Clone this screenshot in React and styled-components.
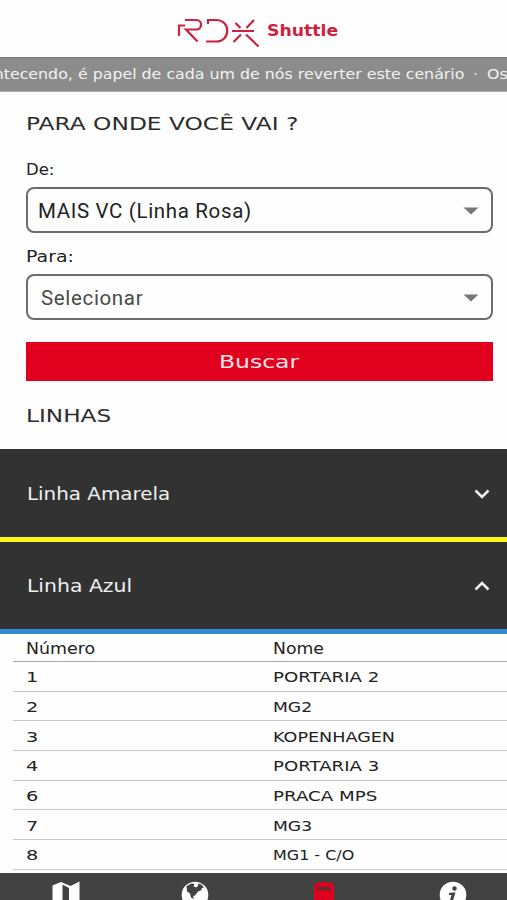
import styled, { createGlobalStyle } from "styled-components";

const stops = [
  { number: "1", name: "PORTARIA 2", stretch: 1.295 },
  { number: "2", name: "MG2", stretch: 1.23 },
  { number: "3", name: "KOPENHAGEN", stretch: 1.255 },
  { number: "4", name: "PORTARIA 3", stretch: 1.295 },
  { number: "6", name: "PRACA MPS", stretch: 1.3 },
  { number: "7", name: "MG3", stretch: 1.23 },
  { number: "8", name: "MG1 - C/O", stretch: 1.14 },
];

const App = () => {
  return (
    <Screen>
      <GlobalStyle />
      <Header>
        <Logo />
        <Wide $size={16} $stretch={1.08} $bold>
          Shuttle
        </Wide>
      </Header>
      <Ticker>
        <TickerText>
          <Wide $size={14} $stretch={1.13} $origin="right">
            acontecendo, é papel de cada um de nós reverter este cenário
          </Wide>
        </TickerText>
        <Dot>·</Dot>
        <Wide $size={14} $stretch={1.13}>
          Os
        </Wide>
      </Ticker>
      <Search>
        <Title>
          <Wide $size={18} $stretch={1.295}>
            PARA ONDE VOCÊ VAI ?
          </Wide>
        </Title>
        <Label>
          <Wide $size={15} $stretch={1.1}>
            De:
          </Wide>
        </Label>
        <Select>
          <span>MAIS VC (Linha Rosa)</span>
          <Caret />
        </Select>
        <Label>
          <Wide $size={15} $stretch={1.26}>
            Para:
          </Wide>
        </Label>
        <Select $placeholder>
          <span>Selecionar</span>
          <Caret />
        </Select>
        <Button>
          <Wide $size={17} $stretch={1.38} $origin="center">
            Buscar
          </Wide>
        </Button>
        <Subtitle>
          <Wide $size={18} $stretch={1.29}>
            LINHAS
          </Wide>
        </Subtitle>
      </Search>
      <Line $color="#f7f71e" $height={93}>
        <Wide $size={17} $stretch={1.17}>
          Linha Amarela
        </Wide>
        <Chevron />
      </Line>
      <Line $color="#318ad2" $height={92}>
        <Wide $size={17} $stretch={1.2}>
          Linha Azul
        </Wide>
        <Chevron up />
      </Line>
      <Stops>
        <Row $head>
          <Wide $size={15} $stretch={1.16}>
            Número
          </Wide>
          <Wide $size={15} $stretch={1.15}>
            Nome
          </Wide>
        </Row>
        {stops.map((stop) => (
          <Row key={stop.number}>
            <Wide $size={14} $stretch={1.38}>
              {stop.number}
            </Wide>
            <Wide $size={14} $stretch={stop.stretch}>
              {stop.name}
            </Wide>
          </Row>
        ))}
      </Stops>
      <Nav>
        <MapIcon />
        <GlobeIcon />
        <BusIcon />
        <InfoIcon />
      </Nav>
    </Screen>
  );
};

const Logo = () => (
  <svg width="84" height="32" viewBox="0 0 84 32" fill="none">
    <g stroke="#c9233f" strokeWidth="2.2">
      <path d="M2 21V10.5H8" />
      <path d="M8 5H19.5C25.5 5 25.5 14.500 19.5 14.500H9L20.500 26.5" />
      <path d="M31 9V5H39C54 5 54 26.500 39 26.500H29" />
      <path d="M58.500 8L63.500 13M77 5L69.500 13M55 16H77M64 19.500L56.500 27M69 19.500L81.500 31.500" />
    </g>
  </svg>
);

const Caret = () => (
  <svg width="16" height="8" viewBox="0 0 16 8">
    <path d="M.5.500h15L8 7.500z" fill="#777" />
  </svg>
);

const Chevron = ({ up }) => (
  <svg width="16" height="10" viewBox="0 0 16 10" fill="none">
    <path
      d={up ? "M1.500 8.500L8 2l6.500 6.500" : "M1.500 1.500L8 8l6.500-6.500"}
      stroke="#eee"
      strokeWidth="2.500"
    />
  </svg>
);

const MapIcon = () => (
  <svg width="28" height="28" viewBox="0 0 28 28">
    <path d="M.5 4.500L9 1l9.500 4L27.500.500V23L18.500 27 9 23.500.5 27z" fill="#fff" />
    <path d="M10.500 3.500L17 7v17.500l-6.500-3z" fill="#424242" />
  </svg>
);

const GlobeIcon = () => (
  <svg width="28" height="28" viewBox="0 0 28 28">
    <circle cx="14" cy="14" r="13.300" fill="#fff" />
    <path
      d="M5.500 5l5-2.500 3 .5-1 2.500 3 1 2-2.500-1-1.500 4 1 2.500 3-2 .5-1 2.500-3 1-3 4-2 .5 1 3-3-1.500-1-4-3-2z"
      fill="#424242"
    />
  </svg>
);

const BusIcon = () => (
  <svg width="28" height="28" viewBox="0 0 28 28">
    <path
      d="M4 6C4 1.500 8 1.200 14 1.200S24 1.500 24 6v17H4z"
      fill="#df001f"
    />
    <rect x="6.500" y="6" width="14.500" height="3.500" rx="1.700" fill="#652b35" />
  </svg>
);

const InfoIcon = () => (
  <svg width="28" height="28" viewBox="0 0 28 28">
    <circle cx="14" cy="14" r="13.300" fill="#fff" />
    <circle cx="15.500" cy="7.500" r="2.200" fill="#424242" />
    <path d="M10 12l6.500-.800-3 10 3-1.500-1 2-4 2c-2 0-1.500-2-1-3l2-6.700H10z" fill="#424242" />
  </svg>
);

const GlobalStyle = createGlobalStyle`
  * {
    box-sizing: border-box;
  }
  body {
    margin: 0;
    background: #fff;
    overflow: hidden;
  }
  svg {
    display: block;
    flex-shrink: 0;
  }
`;

const Screen = styled.div`
  width: 507px;
  height: 900px;
  overflow: hidden;
  display: flex;
  flex-direction: column;
  background: #fefefe;
  color: #2c2c2c;
  font-family: "DejaVu Sans", sans-serif;
`;

/* extended lettering, widened from the regular face */
const Wide = styled.span`
  display: inline-block;
  font-size: ${(props) => props.$size}px;
  font-weight: ${(props) => (props.$bold ? 700 : 400)};
  line-height: 20px;
  white-space: nowrap;
  transform: scaleX(${(props) => props.$stretch});
  transform-origin: ${(props) => props.$origin || "left"} center;
`;

const Header = styled.header`
  height: 57px;
  flex-shrink: 0;
  display: flex;
  align-items: center;
  gap: 6px;
  padding: 4px 0 0 177px;
  color: #cf1f3c;
`;

const Ticker = styled.div`
  height: 35px;
  flex-shrink: 0;
  padding-bottom: 2px;
  display: flex;
  align-items: center;
  background: #8c8c8c;
  border-top: 1px solid #777;
  border-bottom: 1px solid #aaa;
  color: #f2f2f2;
  overflow: hidden;
`;

const TickerText = styled.div`
  width: 464px;
  flex-shrink: 0;
  display: flex;
  justify-content: flex-end;
`;

const Dot = styled.span`
  width: 23px;
  flex-shrink: 0;
  text-align: center;
  font-size: 14px;
`;

const Search = styled.section`
  height: 357px;
  flex-shrink: 0;
  padding: 22px 14px 0 26px;
`;

const Title = styled.h1`
  margin: 0 0 25px;
  height: 20px;
  display: flex;
  font-weight: 400;
`;

const Subtitle = styled.h2`
  margin: 25px 0 0;
  height: 20px;
  display: flex;
  font-weight: 400;
`;

const Label = styled.div`
  height: 20px;
  margin-bottom: 8px;
  padding-top: 1px;
  display: flex;
  color: #222;
`;

const Select = styled.div`
  height: 46px;
  margin-bottom: 13px;
  padding: 2px 12px 0 ${(props) => (props.$placeholder ? 13 : 10)}px;
  display: flex;
  align-items: center;
  justify-content: space-between;
  border: 2px solid #6c6c6c;
  border-radius: 8px;
  color: ${(props) => (props.$placeholder ? "#4a4a4a" : "#222")};
  font-family: Roboto, sans-serif;
  font-size: 20.5px;
  letter-spacing: 0.65px;
`;

const Button = styled.div`
  height: 39px;
  margin-top: 22px;
  display: flex;
  align-items: center;
  justify-content: center;
  background: #e1001e;
  color: #fbe4e7;
`;

const Line = styled.div`
  height: ${(props) => props.$height}px;
  flex-shrink: 0;
  padding: 1px 17px 0 27px;
  display: flex;
  align-items: center;
  justify-content: space-between;
  background: #323232;
  border-bottom: 5px solid ${(props) => props.$color};
  color: #f0f0f0;
`;

const Stops = styled.div`
  height: 239px;
  flex-shrink: 0;
  padding-left: 13px;
`;

const Row = styled.div`
  height: ${(props) => (props.$head ? 28 : 29.7)}px;
  padding: ${(props) => (props.$head ? 3 : 2)}px 0 0 13px;
  display: grid;
  grid-template-columns: 247px 1fr;
  align-items: center;
  justify-items: start;
  border-bottom: 1px solid ${(props) => (props.$head ? "#aaa" : "#c8c8c8")};
  color: #222;
`;

const Nav = styled.nav`
  height: 34px;
  flex-shrink: 0;
  padding: 8px 40px 0 52px;
  display: flex;
  justify-content: space-between;
  background: #424242;
`;

export default App;
